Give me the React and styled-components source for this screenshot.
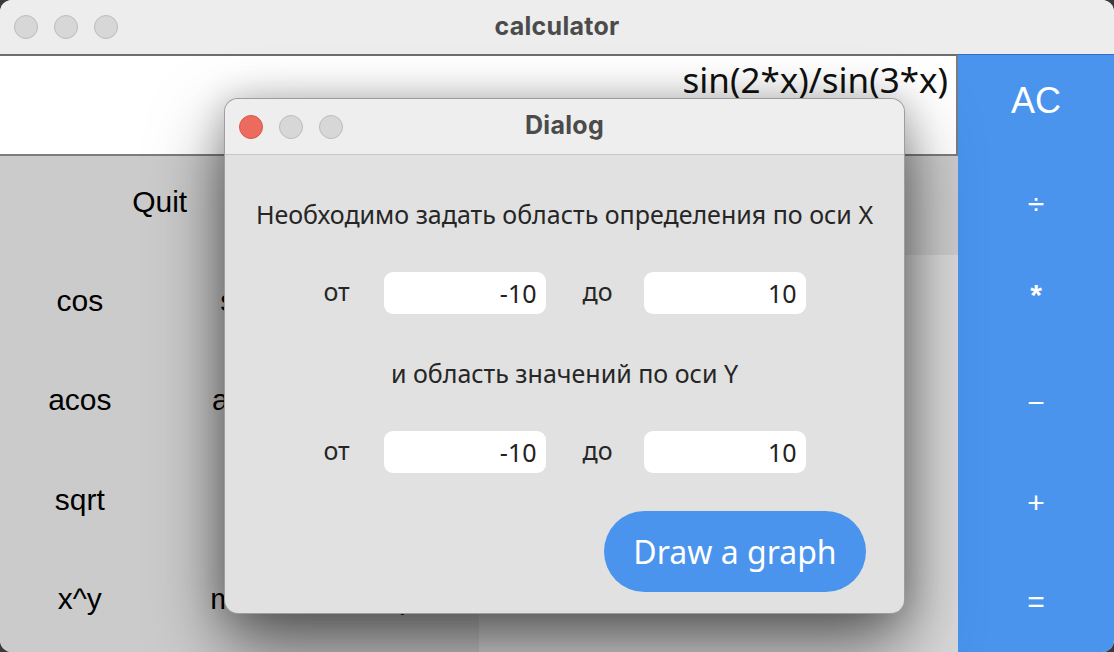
import React from 'react'
import styled, { createGlobalStyle } from 'styled-components'

const GlobalStyle = createGlobalStyle`
  html, body { margin:0; padding:0; background:#3a3a3a; }
  body {
    width:1114px; height:652px; overflow:hidden;
    font-family:'Liberation Sans', Arial, sans-serif;
  }
  * { box-sizing:border-box; }
`

const Window = styled.div`
  position:relative;
  width:1114px;
  height:652px;
  border-radius:12px;
  overflow:hidden;
  display:flex;
  flex-direction:column;
  background:#ededed;
`

const TitleBar = styled.div`
  height:${p => p.$dialog ? '56px' : '54px'};
  flex:none;
  display:grid;
  grid-template-columns:1fr auto 1fr;
  align-items:center;
  padding:0 14px;
  background:${p => p.$dialog ? '#eeeeee' : '#ededed'};
  border-bottom:${p => p.$dialog ? '1px solid #c6c6c6' : 'none'};
`

const Lights = styled.div`
  display:flex;
  gap:16px;
`

const Light = styled.span`
  width:24px;
  height:24px;
  border-radius:50%;
  background:${p => p.$red ? '#ec6a5e' : '#d7d7d7'};
  border:1px solid ${p => p.$red ? '#d8574c' : '#bcbcbc'};
`

const Title = styled.div`
  font-family:Inter, 'Liberation Sans', sans-serif;
  font-weight:700;
  font-size:25px;
  color:#4b4b4b;
  letter-spacing:0.3px;
  margin-top:-3px;
`

const Main = styled.div`
  flex:1;
  display:flex;
  min-height:0;
`

const LeftPane = styled.div`
  width:958px;
  display:flex;
  flex-direction:column;
`

const Display = styled.div`
  height:102px;
  flex:none;
  background:#fff;
  border-top:2px solid #6e6e6e;
  border-bottom:2px solid #7c7c7c;
  border-right:2px solid #7c7c7c;
  padding:2px 8px 0 0;
  text-align:right;
  font-family:'Noto Sans', sans-serif;
  font-size:35px;
  line-height:44px;
  color:#111;
`

const Keypad = styled.div`
  flex:1;
  display:grid;
  grid-template-columns:repeat(6, 1fr);
  grid-template-rows:repeat(5, 1fr);
`

const Key = styled.div`
  grid-column:span ${p => p.$span || 1};
  display:flex;
  align-items:center;
  justify-content:center;
  padding-bottom:7px;
  background:${p => p.$digit ? '#d9d9d9' : '#cbcbcb'};
  font-size:30px;
  color:#000;
`

const OpsColumn = styled.div`
  flex:1;
  display:grid;
  grid-template-rows:repeat(6, 1fr);
  background:#4a94ee;
  border-top:1px solid #2f6fc8;
`

const OpKey = styled.div`
  display:flex;
  align-items:center;
  justify-content:center;
  padding-bottom:${p => p.$lift || 0}px;
  color:#fff;
  font-size:${p => p.$big ? '36px' : '30px'};
  font-weight:${p => p.$bold ? 700 : 400};
`

const Dialog = styled.div`
  position:absolute;
  left:224px;
  top:98px;
  width:681px;
  height:516px;
  border-radius:14px;
  overflow:hidden;
  background:#e1e1e1;
  border:1px solid rgba(0,0,0,0.3);
  box-shadow:0 32px 70px rgba(0,0,0,0.56), 0 0 34px rgba(0,0,0,0.2);
  display:flex;
  flex-direction:column;
`

const DialogBody = styled.div`
  flex:1;
  display:flex;
  flex-direction:column;
  align-items:center;
  padding:43px 0 0 0;
  font-family:'Noto Sans', sans-serif;
  color:#262626;
`

const Caption = styled.div`
  font-size:25px;
  line-height:32px;
  margin-top:${p => p.$gap || 0}px;
`

const RangeRow = styled.div`
  display:grid;
  grid-template-columns:60px 162px 37px 61px 162px;
  align-items:center;
  margin-top:42px;
  height:42px;
`

const Label = styled.span`
  font-size:25px;
  margin-top:-4px;
`

const Field = styled.div`
  height:42px;
  background:#fff;
  border-radius:9px;
  display:flex;
  align-items:center;
  justify-content:flex-end;
  padding-right:9px;
  font-size:25px;
  color:#222;
`

const DrawButton = styled.button`
  align-self:flex-end;
  margin:38px 38px 0 0;
  width:262px;
  height:81px;
  border:none;
  border-radius:41px;
  background:#4a94ee;
  color:#fff;
  font-family:'Noto Sans', sans-serif;
  font-size:32px;
`

// keys in columns 3-6 of rows 2-4 sit fully under the dialog
const funcRows = [
  ['cos', 'sin', '', '', '', ''],
  ['acos', 'asin', '', '', '', ''],
  ['sqrt', 'ln', '', '', '', ''],
  ['x^y', 'mod', '(', '.', '0', 'x'],
]

const ops = [
  { t: '÷' },
  { t: '*', lift: 18, bold: true },
  { t: '−' },
  { t: '+' },
  { t: '=' },
]

export default function App() {
  return (
    <>
      <GlobalStyle />
      <Window>
        <TitleBar>
          <Lights><Light /><Light /><Light /></Lights>
          <Title>calculator</Title>
          <span />
        </TitleBar>
        <Main>
          <LeftPane>
            <Display>sin(2*x)/sin(3*x)</Display>
            <Keypad>
              <Key $span={2}>Quit</Key>
              <Key $span={2} />
              <Key $span={2} />
              {funcRows.map((row, r) => row.map((k, i) => (
                <Key key={r + '-' + i} $digit={i > 2}>{k}</Key>
              )))}
            </Keypad>
          </LeftPane>
          <OpsColumn>
            <OpKey $big $lift={8}>AC</OpKey>
            {ops.map(o => (
              <OpKey key={o.t} $lift={o.lift} $bold={o.bold}>{o.t}</OpKey>
            ))}
          </OpsColumn>
        </Main>

        <Dialog>
          <TitleBar $dialog>
            <Lights><Light $red /><Light /><Light /></Lights>
            <Title>Dialog</Title>
            <span />
          </TitleBar>
          <DialogBody>
            <Caption>Необходимо задать область определения по оси X</Caption>
            <RangeRow>
              <Label>от</Label>
              <Field>-10</Field>
              <span />
              <Label>до</Label>
              <Field>10</Field>
            </RangeRow>
            <Caption $gap={43}>и область значений по оси Y</Caption>
            <RangeRow>
              <Label>от</Label>
              <Field>-10</Field>
              <span />
              <Label>до</Label>
              <Field>10</Field>
            </RangeRow>
            <DrawButton>Draw a graph</DrawButton>
          </DialogBody>
        </Dialog>
      </Window>
    </>
  )
}
